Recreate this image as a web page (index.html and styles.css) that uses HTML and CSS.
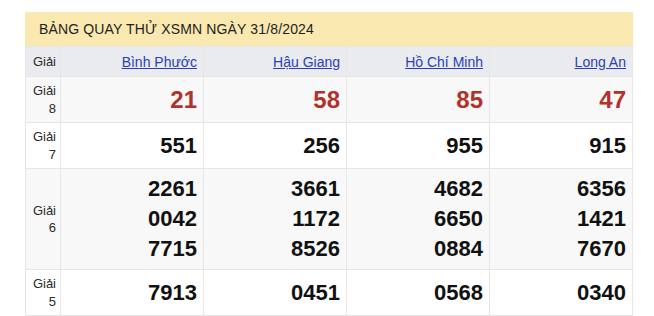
FILE: index.html
```html
<!DOCTYPE html>
<html lang="vi">
<head>
<meta charset="utf-8">
<title>Bảng quay thử XSMN</title>
<link rel="stylesheet" href="styles.css">
</head>
<body>
<div class="box">
  <div class="title">BẢNG QUAY THỬ XSMN NGÀY 31/8/2024</div>
  <table class="kq">
    <thead>
      <tr>
        <th class="lbl">Giải</th>
        <th><a href="#">Bình Phước</a></th>
        <th><a href="#">Hậu Giang</a></th>
        <th><a href="#">Hồ Chí Minh</a></th>
        <th><a href="#">Long An</a></th>
      </tr>
    </thead>
    <tbody>
      <tr class="alt">
        <td class="lbl">Giải 8</td>
        <td class="num red">21</td>
        <td class="num red">58</td>
        <td class="num red">85</td>
        <td class="num red">47</td>
      </tr>
      <tr>
        <td class="lbl">Giải 7</td>
        <td class="num">551</td>
        <td class="num">256</td>
        <td class="num">955</td>
        <td class="num">915</td>
      </tr>
      <tr class="alt">
        <td class="lbl">Giải 6</td>
        <td class="num"><div>2261</div><div>0042</div><div>7715</div></td>
        <td class="num"><div>3661</div><div>1172</div><div>8526</div></td>
        <td class="num"><div>4682</div><div>6650</div><div>0884</div></td>
        <td class="num"><div>6356</div><div>1421</div><div>7670</div></td>
      </tr>
      <tr>
        <td class="lbl">Giải 5</td>
        <td class="num">7913</td>
        <td class="num">0451</td>
        <td class="num">0568</td>
        <td class="num">0340</td>
      </tr>
    </tbody>
  </table>
</div>
</body>
</html>
```
FILE: styles.css
```css
html, body {
  margin: 0;
  padding: 0;
  background: #fff;
}
body {
  font-family: "Liberation Sans", Arial, sans-serif;
  color: #222;
}
.box {
  margin: 12px 21px 0 25px;
  width: 608px;
}
.title {
  background: #f9e8b0;
  height: 34px;
  line-height: 34px;
  padding-left: 14px;
  font-size: 14px;
  color: #1e1e1e;
  letter-spacing: 0.15px;
}
.kq {
  width: 608px;
  border-collapse: collapse;
  table-layout: fixed;
}
.kq th, .kq td {
  border: 1px solid #e6e6e6;
  padding: 5px 6px 5px 4px;
  text-align: right;
  vertical-align: middle;
}
.kq th {
  background: #e9ebef;
  font-weight: normal;
  font-size: 14px;
  height: 21px;
  padding-top: 4px;
  padding-bottom: 4px;
}
.kq th a {
  color: #2b3fb0;
  text-decoration: underline;
}
.kq .lbl {
  width: 26px;
  padding-left: 4px;
  padding-right: 4px;
  font-size: 13px;
  line-height: 17.5px;
  color: #2a2a2a;
}
.kq th.lbl {
  font-size: 13px;
}
.kq tr.alt td {
  background: #f8f8f8;
}
.num {
  font-size: 22px;
  font-weight: bold;
  line-height: 30px;
  color: #111;
  padding-right: 6px;
}
.num.red {
  color: #b3312a;
  font-size: 24px;
}
```
